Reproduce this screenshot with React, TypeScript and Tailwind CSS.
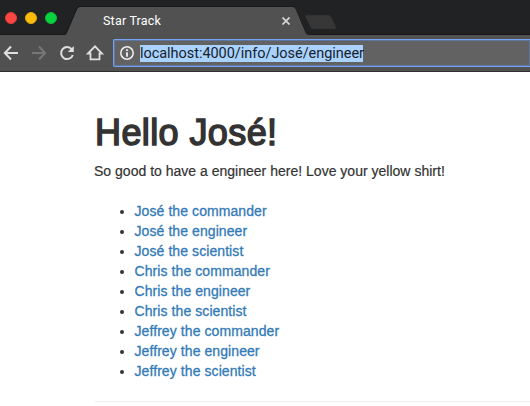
const people = ["José", "Chris", "Jeffrey"];
const jobs = ["commander", "engineer", "scientist"];

function TabStrip() {
  return (
    <div className="relative flex h-[35px] items-center bg-[#212223]">
      <svg className="absolute inset-0" width="530" height="35" viewBox="0 0 530 35">
        <path d="M0 34.5H65L78 6.5H294L307 34.5H530" fill="none" stroke="#191919" strokeWidth="1" />
        <path d="M64.5 35C66 35 66.5 34 67 33L77 9.5Q78 7 80 7H292.500Q294.500 7 295.500 9L305.500 32.500Q306.500 35 309 35Z" fill="#515151" />
        <path d="M306.500 15H328Q330.500 15 331.300 17L336 27Q336.800 29 334.500 29H313.500Q311.500 29 310.500 27L305.500 17Q304.500 15 306.500 15Z" fill="#373737" stroke="#2b2b2b" strokeWidth=".7" />
      </svg>
      <div className="relative ml-[5px] flex gap-2">
        <span className="size-3 rounded-full border border-[#e33e39] bg-[#fc4643]" />
        <span className="size-3 rounded-full border border-[#e5a910] bg-[#fdbc08]" />
        <span className="size-3 rounded-full border border-[#13b838] bg-[#06d53f]" />
      </div>
      <span className="relative ml-[46px] mt-[7px] w-[179px] font-['Roboto',sans-serif] text-[12.5px] leading-4 tracking-[0.2px] text-white">Star Track</span>
      <svg className="relative mt-[7px]" width="8" height="8" viewBox="0 0 8 8">
        <path d="M.5.500 7.500 7.500M7.500.500.500 7.500" stroke="#d5d5d5" strokeWidth="1.700" />
      </svg>
    </div>
  );
}

function Toolbar() {
  return (
    <div className="flex h-[37px] items-start border-b border-[#302d2f] bg-[#515151] pt-1">
      <svg width="113" height="28" viewBox="0 0 113 28" fill="none" strokeWidth="2">
        <path d="M18 14H5M11 7.500 4.800 14 11 20.500" stroke="#dfdfdf" />
        <path d="M32 14H45M39 7.500 45.200 14 39 20.500" stroke="#777" />
        <path d="M71.800 10.300A6 6 0 1 0 72.800 16" stroke="#dfdfdf" />
        <path d="M73.800 7V13H67.800Z" fill="#dfdfdf" />
        <path d="M88 14.500 95 7.300 102 14.500H99.500V20.300H90.500V14.500Z" stroke="#dfdfdf" strokeWidth="1.800" />
      </svg>
      <div className="flex h-7 flex-1 items-center rounded-l-[2px] border border-r-0 border-[#78a2f2] bg-[#626262] pl-[6px] shadow-[inset_0_0_0_1px_#5e75a0]">
        <svg width="14" height="14" viewBox="0 0 14 14" fill="none">
          <circle cx="7" cy="7" r="6.200" stroke="#f1f1f1" strokeWidth="1.500" />
          <path d="M7 3.200V5M7 6.200V10.700" stroke="#f1f1f1" strokeWidth="1.800" />
        </svg>
        <span className="ml-[6px] h-[17px] w-[223px] whitespace-nowrap bg-[#a9d3fe] font-['Roboto',sans-serif] text-[14.5px] leading-[18px] tracking-[-0.04px] text-[#17212c]">
          localhost:4000/info/José/engineer
        </span>
      </div>
    </div>
  );
}

export default function App() {
  return (
    <div className="h-[406px] w-[530px] overflow-hidden bg-white font-['Liberation_Sans',Arial,sans-serif] text-[#333]">
      <TabStrip />
      <Toolbar />
      <main className="pl-[95px] pt-[41px] text-[14px] leading-5">
        <h1 className="whitespace-nowrap text-[36px] font-normal leading-[39px] tracking-[0.4px] [-webkit-text-stroke:1.5px_#333]">Hello José!</h1>
        <p className="-ml-px mt-[9px] whitespace-nowrap tracking-[0.01px] [-webkit-text-stroke:0.2px_#333]">So good to have a engineer here! Love your yellow shirt!</p>
        <ul className="mt-5 list-disc pl-10">
          {people.flatMap((person) =>
            jobs.map((job) => (
              <li key={person + job}>
                <a className="-ml-[0.5px] tracking-[0.08px] text-[#337ab7] [-webkit-text-stroke:0.3px_#337ab7]">{person} the {job}</a>
              </li>
            )),
          )}
        </ul>
        <hr className="mt-5 border-[#eee]" />
      </main>
    </div>
  );
}
